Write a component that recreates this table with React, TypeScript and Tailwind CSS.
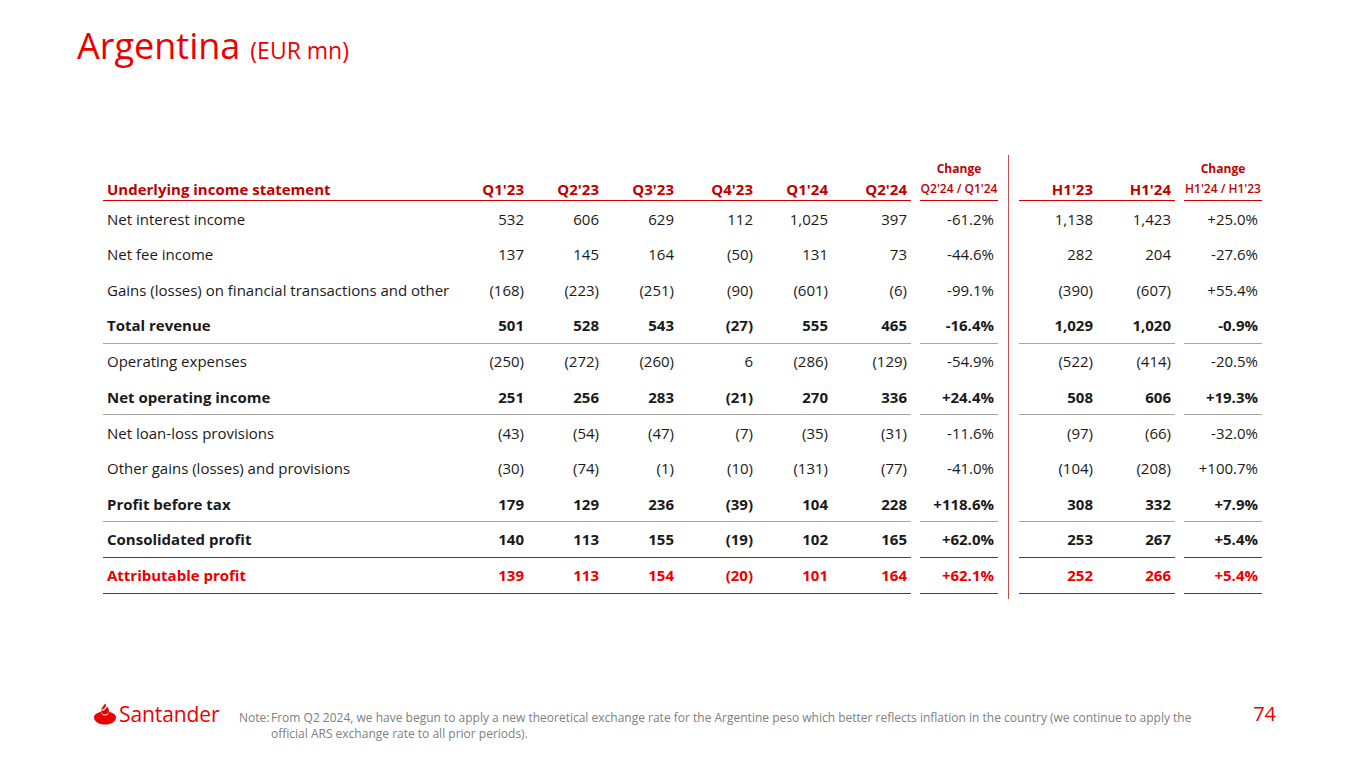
type Row = {
  label: string;
  q: string[];
  chg: string;
  h: string[];
  chg2: string;
  bold?: boolean;
  line?: "grey" | "red";
  red?: boolean;
};

const rows: Row[] = [
  { label: "Net interest income", q: ["532", "606", "629", "112", "1,025", "397"], chg: "-61.2%", h: ["1,138", "1,423"], chg2: "+25.0%" },
  { label: "Net fee income", q: ["137", "145", "164", "(50)", "131", "73"], chg: "-44.6%", h: ["282", "204"], chg2: "-27.6%" },
  { label: "Gains (losses) on financial transactions and other", q: ["(168)", "(223)", "(251)", "(90)", "(601)", "(6)"], chg: "-99.1%", h: ["(390)", "(607)"], chg2: "+55.4%" },
  { label: "Total revenue", q: ["501", "528", "543", "(27)", "555", "465"], chg: "-16.4%", h: ["1,029", "1,020"], chg2: "-0.9%", bold: true, line: "grey" },
  { label: "Operating expenses", q: ["(250)", "(272)", "(260)", "6", "(286)", "(129)"], chg: "-54.9%", h: ["(522)", "(414)"], chg2: "-20.5%" },
  { label: "Net operating income", q: ["251", "256", "283", "(21)", "270", "336"], chg: "+24.4%", h: ["508", "606"], chg2: "+19.3%", bold: true, line: "grey" },
  { label: "Net loan-loss provisions", q: ["(43)", "(54)", "(47)", "(7)", "(35)", "(31)"], chg: "-11.6%", h: ["(97)", "(66)"], chg2: "-32.0%" },
  { label: "Other gains (losses) and provisions", q: ["(30)", "(74)", "(1)", "(10)", "(131)", "(77)"], chg: "-41.0%", h: ["(104)", "(208)"], chg2: "+100.7%" },
  { label: "Profit before tax", q: ["179", "129", "236", "(39)", "104", "228"], chg: "+118.6%", h: ["308", "332"], chg2: "+7.9%", bold: true, line: "grey" },
  { label: "Consolidated profit", q: ["140", "113", "155", "(19)", "102", "165"], chg: "+62.0%", h: ["253", "267"], chg2: "+5.4%", bold: true, line: "red" },
  { label: "Attributable profit", q: ["139", "113", "154", "(20)", "101", "164"], chg: "+62.1%", h: ["252", "266"], chg2: "+5.4%", bold: true, line: "red", red: true },
];

const qWidths = ["w-[79px]", "w-[75px]", "w-[75px]", "w-[79px]", "w-[75px]", "w-[79px]"];
const qHeads = ["Q1'23", "Q2'23", "Q3'23", "Q4'23", "Q1'24", "Q2'24"];

function Sep() {
  return (
    <div className="w-[21px] self-stretch flex">
      <div className="ml-[10px] w-px bg-[#c0504d]" />
    </div>
  );
}

function Flame() {
  return (
    <svg width="24" height="22" viewBox="0 0 24 22" className="shrink-0">
      <path
        d="M1 14.5C1 11.6 4 9.6 8 8.7C8.2 10.9 9.8 12.6 12 12.6C14.2 12.6 15.8 10.9 16 8.7C20 9.6 23 11.6 23 14.5C23 18.6 18 21.6 12 21.6C6 21.6 1 18.6 1 14.5Z"
        fill="#ec0000"
      />
      <path d="M12 0.4C13.6 3 16 5.1 16 8C16 10.3 14.2 11.6 12 11.6C9.8 11.6 8 10.3 8 8C8 5.1 10.4 3 12 0.4Z" fill="#ec0000" />
      <path d="M8.3 7.2C10.6 7.4 13 5.2 13.6 2.6" stroke="#fff" strokeWidth="1.3" fill="none" />
    </svg>
  );
}

export default function App() {
  return (
    <div className="w-[1365px] h-[768px] bg-white font-['Open_Sans',sans-serif] text-[#1a1a1a] flex flex-col overflow-hidden">
      {/* Title */}
      <h1 className="pl-[77px] pt-[28px] leading-none text-[#ec0000] text-[36px] flex items-baseline gap-[10px]">
        <span>Argentina</span>
        <span className="text-[23px]">(EUR mn)</span>
      </h1>

      {/* Table */}
      <div className="ml-[103px] mt-[91px] flex flex-col">
        {/* Change row */}
        <div className="flex h-[23px] items-end text-[12px] font-bold text-[#c00000]">
          <div className="w-[346px]" />
          <div className="w-[462px]" />
          <div className="w-[9px]" />
          <div className="w-[78px] text-center pb-[1px] leading-4">Change</div>
          <Sep />
          <div className="w-[156px]" />
          <div className="w-[9px]" />
          <div className="w-[78px] text-center pb-[1px] leading-4">Change</div>
        </div>

        {/* Header row */}
        <div className="flex h-[23px] text-[#c00000] font-bold text-[15px]">
          <div className="flex border-b-[1.5px] border-[#d40000]">
            <div className="w-[346px] pl-1 flex items-center">Underlying income statement</div>
            {qHeads.map((h, i) => (
              <div key={h} className={`${qWidths[i]} pr-1 flex items-center justify-end`}>
                {h}
              </div>
            ))}
          </div>
          <div className="w-[9px]" />
          <div className="w-[78px] border-b-[1.5px] border-[#d40000] flex items-center justify-center text-[12px] font-semibold">
            Q2'24 / Q1'24
          </div>
          <Sep />
          <div className="flex border-b-[1.5px] border-[#d40000]">
            <div className="w-[78px] pr-1 flex items-center justify-end">H1'23</div>
            <div className="w-[78px] pr-1 flex items-center justify-end">H1'24</div>
          </div>
          <div className="w-[9px]" />
          <div className="w-[78px] border-b-[1.5px] border-[#d40000] flex items-center justify-center text-[12px] font-semibold">
            H1'24 / H1'23
          </div>
        </div>

        {/* Data rows */}
        {rows.map((r) => {
          const border =
            r.line === "grey"
              ? "border-b border-[#a6a6a6]"
              : r.line === "red"
              ? "border-b-[1.5px] border-[#e60000]"
              : "";
          return (
            <div
              key={r.label}
              className={`flex h-[35.7px] text-[15px] ${r.bold ? "font-bold" : ""} ${r.red ? "text-[#ec0000]" : ""}`}
            >
              <div className={`flex ${border}`}>
                <div className="w-[346px] pl-1 flex items-center whitespace-nowrap">{r.label}</div>
                {r.q.map((v, i) => (
                  <div key={i} className={`${qWidths[i]} pr-1 flex items-center justify-end`}>
                    {v}
                  </div>
                ))}
              </div>
              <div className="w-[9px]" />
              <div className={`w-[78px] pr-1 flex items-center justify-end ${border}`}>{r.chg}</div>
              <Sep />
              <div className={`flex ${border}`}>
                <div className="w-[78px] pr-1 flex items-center justify-end">{r.h[0]}</div>
                <div className="w-[78px] pr-1 flex items-center justify-end">{r.h[1]}</div>
              </div>
              <div className="w-[9px]" />
              <div className={`w-[78px] pr-1 flex items-center justify-end ${border}`}>{r.chg2}</div>
            </div>
          );
        })}

        {/* line tail */}
        <div className="flex h-[5px]">
          <div className="w-[895px]" />
          <Sep />
        </div>
      </div>

      {/* Footer */}
      <div className="mt-auto mb-[26px] ml-[93px] flex items-start">
        <div className="flex items-end gap-[2px] w-[131px] mt-[2px]">
          <Flame />
          <span className="text-[#ec0000] text-[21px] leading-none font-medium tracking-[-0.1px]">Santander</span>
        </div>
        <div className="ml-[15px] mt-[9px] flex text-[12px] leading-4 text-[#808080] whitespace-nowrap">
          <span className="w-[32px]">Note:</span>
          <span>
            From Q2 2024, we have begun to apply a new theoretical exchange rate for the Argentine peso which better reflects inflation in the country (we continue to apply the
            <br />
            official ARS exchange rate to all prior periods).
          </span>
        </div>
        <div className="ml-auto mr-[89px] mt-[3px] text-[20px] leading-none text-[#ec0000]">74</div>
      </div>
    </div>
  );
}
